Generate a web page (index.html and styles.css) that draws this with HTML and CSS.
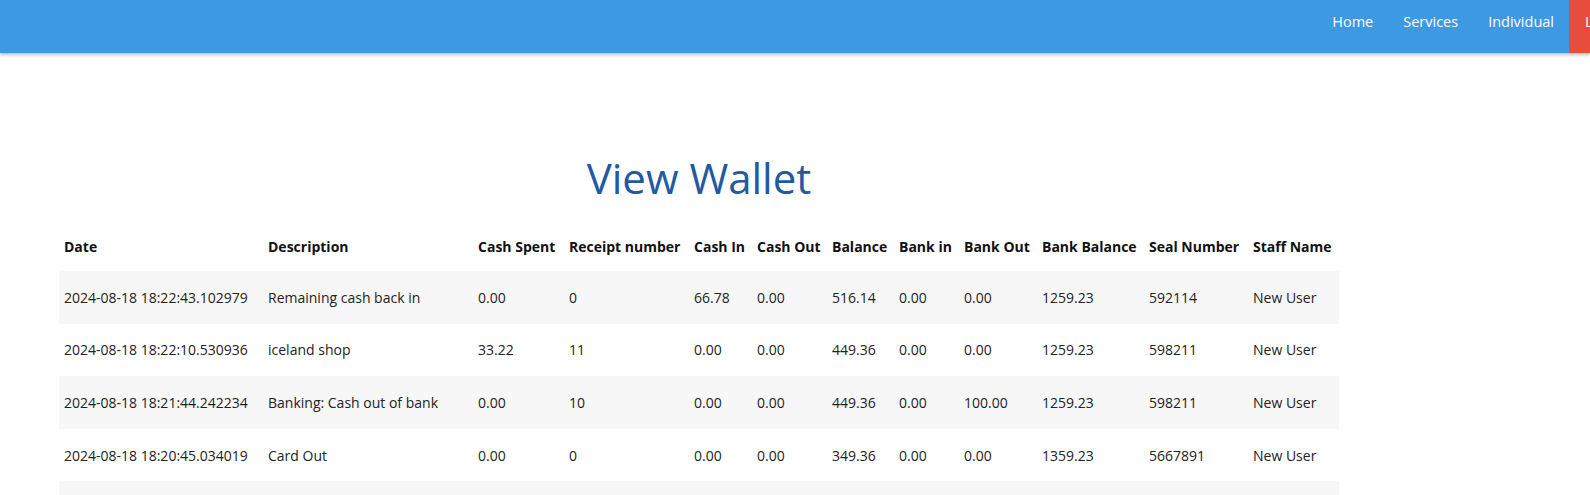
FILE: index.html
```html
<!DOCTYPE html>
<html>
<head>
<meta charset="utf-8">
<link rel="stylesheet" href="styles.css">
</head>
<body>
<nav class="navbar">
  <ul class="nav-links">
    <li><a href="#">Home</a></li>
    <li><a href="#">Services</a></li>
    <li><a href="#">Individual</a></li>
    <li class="logout"><a href="#">Logout</a></li>
  </ul>
</nav>
<main class="content">
  <div class="wallet">
    <h1 class="title">View Wallet</h1>
    <table class="wallet-table">
      <colgroup>
        <col class="c-date"><col class="c-desc"><col class="c-spent"><col class="c-receipt">
        <col class="c-in"><col class="c-out"><col class="c-bal"><col class="c-bin">
        <col class="c-bout"><col class="c-bbal"><col class="c-seal"><col class="c-staff">
      </colgroup>
      <thead>
        <tr>
          <th>Date</th><th>Description</th><th>Cash Spent</th><th>Receipt number</th>
          <th>Cash In</th><th>Cash Out</th><th>Balance</th><th>Bank in</th>
          <th>Bank Out</th><th>Bank Balance</th><th>Seal Number</th><th>Staff Name</th>
        </tr>
      </thead>
      <tbody>
        <tr>
          <td>2024-08-18 18:22:43.102979</td><td>Remaining cash back in</td><td>0.00</td><td>0</td>
          <td>66.78</td><td>0.00</td><td>516.14</td><td>0.00</td><td>0.00</td><td>1259.23</td><td>592114</td><td>New User</td>
        </tr>
        <tr>
          <td>2024-08-18 18:22:10.530936</td><td>iceland shop</td><td>33.22</td><td>11</td>
          <td>0.00</td><td>0.00</td><td>449.36</td><td>0.00</td><td>0.00</td><td>1259.23</td><td>598211</td><td>New User</td>
        </tr>
        <tr>
          <td>2024-08-18 18:21:44.242234</td><td>Banking: Cash out of bank</td><td>0.00</td><td>10</td>
          <td>0.00</td><td>0.00</td><td>449.36</td><td>0.00</td><td>100.00</td><td>1259.23</td><td>598211</td><td>New User</td>
        </tr>
        <tr>
          <td>2024-08-18 18:20:45.034019</td><td>Card Out</td><td>0.00</td><td>0</td>
          <td>0.00</td><td>0.00</td><td>349.36</td><td>0.00</td><td>0.00</td><td>1359.23</td><td>5667891</td><td>New User</td>
        </tr>
        <tr class="partial">
          <td></td><td></td><td></td><td></td><td></td><td></td><td></td><td></td><td></td><td></td><td></td><td></td>
        </tr>
      </tbody>
    </table>
  </div>
</main>
</body>
</html>
```

FILE: styles.css
```css
html, body {
  margin: 0;
  padding: 0;
  height: 495px;
  overflow: hidden;
  background: #ffffff;
  font-family: "Open Sans", "Noto Sans", sans-serif;
  color: #212529;
}

.navbar {
  height: 53px;
  background: #3c99e2;
  box-shadow: 0 2px 3px rgba(0, 0, 0, 0.25);
  display: flex;
  justify-content: flex-end;
  position: relative;
  z-index: 1;
}

.nav-links {
  list-style: none;
  margin: 0;
  padding: 0;
  display: flex;
  height: 100%;
}

.nav-links li {
  display: flex;
  align-items: flex-start;
}

.nav-links a {
  color: #ffffff;
  text-decoration: none;
  font-size: 14.5px;
  padding: 0 15px;
  line-height: 44px;
  white-space: nowrap;
}

.nav-links .logout {
  background: #e74c3c;
  width: 21px;
  overflow: hidden;
}

.nav-links .logout a {
  padding: 0 16px;
}

.content {
  padding: 98px 0 0 59px;
}

.wallet {
  display: inline-block;
}

.title {
  margin: 0 0 16px;
  text-align: center;
  font-weight: 400;
  font-size: 42px;
  line-height: 54px;
  color: #2259a3;
}

.wallet-table {
  border-collapse: collapse;
  table-layout: fixed;
  width: 1280px;
  font-size: 14px;
}

.c-date { width: 204px; }
.c-desc { width: 210px; }
.c-spent { width: 91px; }
.c-receipt { width: 125px; }
.c-in { width: 63px; }
.c-out { width: 75px; }
.c-bal { width: 67px; }
.c-bin { width: 65px; }
.c-bout { width: 78px; }
.c-bbal { width: 107px; }
.c-seal { width: 104px; }
.c-staff { width: 91px; }

.wallet-table th,
.wallet-table td {
  text-align: left;
  padding: 0 0 0 5px;
  white-space: nowrap;
}

.wallet-table th {
  height: 50px;
  font-weight: 700;
  color: #111111;
}

.wallet-table td {
  height: 52.6px;
  color: #222222;
}

.wallet-table tr.partial td {
  height: 20px;
}

.wallet-table tbody tr:nth-child(odd) {
  background: #f7f7f7;
}
```
